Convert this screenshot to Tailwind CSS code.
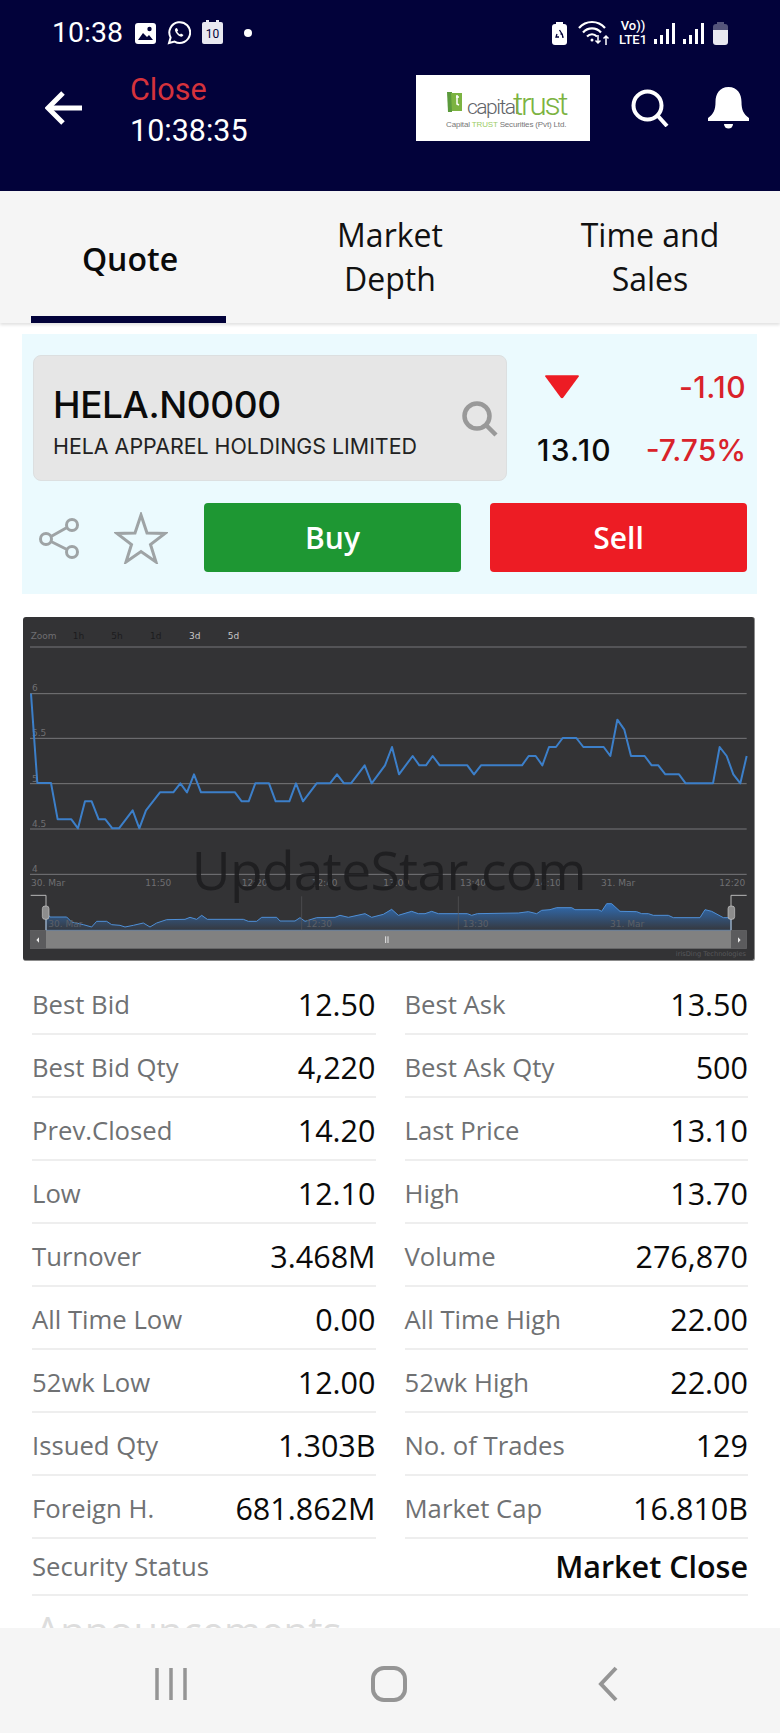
<!DOCTYPE html>
<html lang="en">
<head>
    <meta charset="UTF-8">
    <title>HELA.N0000 - Quote</title>
    <script src="https://cdn.jsdelivr.net/npm/@tailwindcss/browser@4"></script>
</head>
<body class="bg-white">
<div class="flex flex-col w-[780px] h-[1733px] overflow-hidden bg-white font-['Open_Sans',sans-serif]">

    <!-- status bar + app header -->
    <header class="h-[191px] shrink-0 bg-[#02023a] text-white font-['Roboto',sans-serif]">
        <div class="flex items-center h-[66px] pl-[52px] pr-[52px]">
            <span class="text-[28.500px] leading-none w-[83px]">10:38</span>
            <svg class="w-[21px] h-[21px]" viewBox="0 0 21 21"><rect width="21" height="21" rx="3" fill="#fff"/><circle cx="14.5" cy="6" r="2.2" fill="#02023a"/><path d="M3 17l5-7 4 4 2-2 4 5z" fill="#02023a"/></svg>
            <svg class="w-[24px] h-[24px] ml-[11px]" viewBox="0 0 24 24" fill="none" stroke="#fff" stroke-width="2"><path d="M2 22l1.6-5.5A10.4 10.4 0 1 1 7.6 20.6z"/><path d="M8.5 7.5c-1 1 -.6 3 1.5 5.400s4.300 3.300 5.500 2.400l1-1.400-2.500-1.500-1 1c-1-.4-2.300-1.700-2.800-2.900l1-1-1.300-2.600z" fill="#fff" stroke="none"/></svg>
            <div class="relative w-[21px] h-[22px] ml-[11px] rounded-[2px] bg-[#e8e8f0] text-[#02023a] text-[12px] leading-[25px] text-center">
                10
                <span class="absolute left-[4px] -top-[2px] w-[3px] h-[3px] bg-[#e8e8f0]"></span>
                <span class="absolute right-[4px] -top-[2px] w-[3px] h-[3px] bg-[#e8e8f0]"></span>
            </div>
            <span class="w-[8px] h-[8px] rounded-full bg-white ml-[21px]"></span>
            <div class="flex-1"></div>
            <svg class="w-[15px] h-[23px]" viewBox="0 0 15 23"><rect x="4" width="7" height="3" fill="#fff"/><rect y="2" width="15" height="21" rx="3" fill="#fff"/><path d="M7.500 8l2.500 4-1.500 0M5 12l-1 3h3M10 15h1l-1-3" stroke="#02023a" stroke-width="1.300" fill="none"/></svg>
            <svg class="w-[32px] h-[26px] ml-[11px]" viewBox="0 0 32 26" fill="none" stroke="#fff" stroke-width="2.200"><path d="M1 8c7-8 19-8 26 0"/><path d="M5 12.500c5-5.500 13-5.500 18 0"/><path d="M9 16.500c3-3 7-3 10 0"/><circle cx="14" cy="20" r="1.500" fill="#fff" stroke="none"/><path d="M20 15v8m-2.500-2.500L20 23l2.500-2.500M28 25v-9m-2.500 2.500L28 16l2.500 2.500" stroke-width="1.500"/></svg>
            <div class="w-[28px] ml-[9px] text-[13px] leading-[14px] font-medium text-center">Vo))<br>LTE1</div>
            <svg class="w-[21px] h-[21px] ml-[7px]" viewBox="0 0 21 21" fill="#fff"><rect x="0" y="16" width="3" height="5"/><rect x="6" y="12" width="3" height="9"/><rect x="12" y="6" width="3" height="15"/><rect x="18" y="0" width="3" height="21"/></svg>
            <svg class="w-[21px] h-[21px] ml-[8px]" viewBox="0 0 21 21" fill="#fff"><rect x="0" y="16" width="3" height="5"/><rect x="6" y="12" width="3" height="9"/><rect x="12" y="6" width="3" height="15"/><rect x="18" y="0" width="3" height="21"/></svg>
            <svg class="w-[15px] h-[23px] ml-[9px]" viewBox="0 0 15 23"><rect x="4" width="7" height="3" fill="#55557a"/><path d="M0 5a3 3 0 0 1 3-3h9a3 3 0 0 1 3 3v3H0z" fill="#55557a"/><path d="M0 8h15v12a3 3 0 0 1-3 3H3a3 3 0 0 1-3-3z" fill="#e8e8f0"/></svg>
        </div>
        <div class="flex items-start h-[80px] pt-[9px]">
            <svg class="w-[37px] h-[34px] ml-[45px] mt-[16px]" viewBox="0 0 37 34" fill="none" stroke="#fff" stroke-width="5"><path d="M37 17H4"/><path d="M18 2L3 17l15 15"/></svg>
            <div class="ml-[48px] w-[286px] -mt-[6px] text-[30.500px] leading-[41px]">
                <div class="text-[#d5323c]">Close</div>
                <div>10:38:35</div>
            </div>
            <!-- logo -->
            <div class="w-[174px] h-[66px] bg-white relative">
                <svg class="absolute left-[31px] top-[17px] w-[15px] h-[20px]" viewBox="0 0 15 20"><path d="M0 0h5v20H1z" fill="#5b9a3c"/><path d="M4 1h11v18H5z" fill="#7cb342"/><path d="M9 5h3M10 3v9l2 1" stroke="#fff" stroke-width="1.500" fill="none"/></svg>
                <span class="absolute left-[51px] top-[18px] text-[21px] leading-[28px] tracking-[-1.500px] text-[#5f6368] font-['Roboto',sans-serif] font-light">capital</span>
                <span class="absolute left-[97px] top-[10px] text-[32px] leading-[38px] tracking-[-2.400px] text-[#7cb342] font-['Roboto',sans-serif] font-light">trust</span>
                <span class="absolute left-[30px] top-[43px] text-[8px] leading-[13px] tracking-[-.15px] whitespace-nowrap text-[#777777] font-['Liberation_Sans',sans-serif]">Capital <span class="text-[#9ccc65]">TRUST</span> Securities (Pvt) Ltd.</span>
            </div>
            <svg class="w-[38px] h-[38px] ml-[41px] mt-[14px]" viewBox="0 0 38 38" fill="none" stroke="#fff" stroke-width="4"><circle cx="16.500" cy="16.500" r="14"/><path d="M26.500 26.500L36 37"/></svg>
            <svg class="w-[41px] h-[42px] ml-[39px] mt-[12px]" viewBox="0 0 41 42" fill="#fff"><path d="M20.500 0c9 0 13 7 13 15 0 8 2 12 7.500 16v3H0v-3c5.500-4 7.500-8 7.500-16 0-8 4-15 13-15z"/><path d="M16 37h9a4.500 4.500 0 0 1-9 0z"/></svg>
        </div>
    </header>

    <main class="flex-1 min-h-0 overflow-hidden">
        <!-- tabs -->
        <nav class="grid grid-cols-3 h-[132px] bg-[#f5f5f5] shadow-[0_2px_3px_rgba(0,0,0,0.12)] text-[#111111] text-[32px] leading-[44px] text-center">
            <div class="relative flex items-center justify-center font-semibold text-[#0a0a0a]">
                <span class="pt-[4px]">Quote</span>
                <div class="absolute left-[31px] bottom-0 w-[195px] h-[7px] bg-[#02023a]"></div>
            </div>
            <div class="flex items-center justify-center">Market<br>Depth</div>
            <div class="flex items-center justify-center">Time and<br>Sales</div>
        </nav>

        <!-- symbol card -->
        <section class="ml-[22px] mt-[11px] w-[735px] h-[260px] bg-[#ebfafe] pl-[11px] pt-[21px]">
            <div class="flex">
                <div class="relative w-[474px] h-[126px] rounded-[8px] bg-[#e6e6e6] border border-[#dcdfe0] pl-[19px] pt-[25px]">
                    <div class="text-[37px] leading-[48px] font-medium text-[#0b0b0b] font-['Inter',sans-serif] tracking-[-.4px]">HELA.N0000</div>
                    <div class="text-[21.400px] leading-[28px] mt-[3px] text-[#222222] font-['Inter',sans-serif]">HELA APPAREL HOLDINGS LIMITED</div>
                    <svg class="absolute left-[428px] top-[45px] w-[36px] h-[36px]" viewBox="0 0 36 36" fill="none" stroke="#999999" stroke-width="4.500"><circle cx="15" cy="15" r="12.500"/><path d="M24 24l10 10"/></svg>
                </div>
                <div class="ml-[30px] w-[209px] font-['Inter',sans-serif] font-medium">
                    <div class="flex items-center justify-between h-[42px] mt-[11px]">
                        <svg class="w-[36px] h-[24px] ml-[7px]" viewBox="0 0 35 23"><path d="M1 1a1 1 0 0 1 1-1h31a1 1 0 0 1 1 1L19 21.500a2 2 0 0 1-3 0z" fill="#ed1c24"/></svg>
                        <span class="text-[30px] leading-none text-[#d9222a] tracking-[.5px]">-1.10</span>
                    </div>
                    <div class="flex items-center justify-between h-[42px] mt-[21px]">
                        <span class="text-[30px] leading-none text-[#0b0b0b] tracking-[1.200px]">13.10</span>
                        <span class="text-[30px] leading-none text-[#d9222a]">-7.75%</span>
                    </div>
                </div>
            </div>
            <div class="flex items-center mt-[22px]">
                <svg class="w-[40px] h-[42px] ml-[6px]" viewBox="0 0 40 42" fill="none" stroke="#9ea3a5" stroke-width="3"><circle cx="33" cy="8" r="5.500"/><circle cx="7" cy="22" r="5.500"/><circle cx="33" cy="35" r="5.500"/><path d="M28 10.500L12 19.500M12 24.500l16 8"/></svg>
                <svg class="w-[54px] h-[52px] ml-[35px]" viewBox="0 0 54 52" fill="none" stroke="#9ea3a5" stroke-width="3"><path d="M27 3l6 18 18 .5-14.500 11 5.500 17.500-15-10.500-15 10.500 5.500-17.500L3 21.500l18-.5z"/></svg>
                <button class="w-[257px] h-[69px] ml-[36px] rounded-[4px] bg-[#1e9733] text-white text-[30px] font-semibold">Buy</button>
                <button class="w-[257px] h-[69px] ml-[29px] rounded-[4px] bg-[#ed1c24] text-white text-[30px] font-semibold">Sell</button>
            </div>
        </section>

        <!-- chart, coordinates are 3x screen pixels -->
        <section class="ml-[23px] mt-[23px] w-[732px] h-[344px] rounded-[3px] bg-[#333335] overflow-hidden border-r-1 border-b-1 border-[#8c8c8c]">
            <svg class="w-[731px] h-[343px]" viewBox="69 20 2193 1029" font-family="'DejaVu Sans',sans-serif">
                <defs>
                    <linearGradient id="navFill" x1="0" y1="0" x2="0" y2="1">
                        <stop offset="0" stop-color="#2f6db5"/>
                        <stop offset="1" stop-color="#36383d"/>
                    </linearGradient>
                </defs>
                <g stroke="#77777a" stroke-width="3">
                    <path d="M90 110H2240M90 250H2240M90 384H2240M90 520H2240M90 656H2240M90 792H2240"/>
                </g>
                <g font-size="27" fill="#6f6f72">
                    <text x="92" y="85">Zoom</text>
                    <text x="218" y="87" fill="#1c1c1e">1h</text>
                    <text x="334" y="87" fill="#1c1c1e">5h</text>
                    <text x="450" y="87" fill="#1c1c1e">1d</text>
                    <text x="567" y="87" fill="#c8c8c8">3d</text>
                    <text x="683" y="87" fill="#c8c8c8">5d</text>
                    <text x="96" y="243">6</text>
                    <text x="96" y="378">5.5</text>
                    <text x="96" y="515">5</text>
                    <text x="96" y="651">4.5</text>
                    <text x="96" y="786">4</text>
                    <text x="93" y="828">30. Mar</text>
                    <text x="436" y="828">11:50</text>
                    <text x="725" y="828">12:20</text>
                    <text x="935" y="828">12:40</text>
                    <text x="1150" y="828">13:00</text>
                    <text x="1380" y="828">13:40</text>
                    <text x="1605" y="828">14:10</text>
                    <text x="1803" y="828">31. Mar</text>
                    <text x="2158" y="828">12:20</text>
                </g>
                <polyline fill="none" stroke="#3c7fc9" stroke-width="6" stroke-linejoin="round" points="93,250 112,518 153,518 173,627 214,627 234,654 255,573 275,573 296,627 316,627 337,654 357,654 398,600 418,654 438,600 480,546 520,546 541,519 561,546 582,492 603,546 705,546 725,573 746,573 766,519 807,519 827,573 868,573 888,519 909,573 950,519 990,519 1011,492 1032,519 1053,519 1094,465 1115,519 1155,465 1176,410 1197,492 1238,437 1258,465 1278,465 1298,437 1319,465 1402,465 1422,492 1443,465 1566,465 1586,437 1607,437 1627,465 1647,410 1668,410 1688,383 1729,383 1750,410 1811,410 1831,437 1852,328 1873,358 1893,437 1934,437 1955,465 1975,465 1996,492 2037,492 2057,519 2139,519 2159,410 2180,437 2200,492 2221,519 2240,437"/>
                <!-- navigator -->
                <path fill="url(#navFill)" stroke="#4f8fd6" stroke-width="3" stroke-linejoin="round" d="M138 960V905L150 920 200 920 215 935 250 943 275 950 290 933 320 933 335 943 360 945 375 950 400 945 430 938 450 950 470 938 500 928 555 927 570 921 590 927 605 915 622 927 730 927 745 933 770 933 785 921 830 921 840 932 885 932 900 922 915 933 950 922 1005 921 1020 915 1045 921 1095 910 1115 921 1150 912 1175 897 1195 915 1235 903 1255 910 1275 910 1295 903 1315 910 1402 910 1415 915 1432 910 1555 908 1585 904 1610 910 1625 900 1650 898 1670 892 1715 892 1725 898 1795 898 1805 903 1820 880 1835 880 1860 903 1910 904 1925 910 1945 910 1960 915 2005 915 2020 922 2100 922 2115 898 2135 903 2170 922 2193 922V960Z"/>
                <path d="M905 858V960M1375 858V960" stroke="#57575a" stroke-width="2"/>
                <g font-size="27" fill="#5c6068">
                    <text x="145" y="950">30. Mar</text>
                    <text x="918" y="950">12:30</text>
                    <text x="1388" y="950">13:30</text>
                    <text x="1830" y="950">31. Mar</text>
                </g>
                <path d="M92 855H138V960M2193 960V855H2240" fill="none" stroke="#b9b9b9" stroke-width="3"/>
                <rect x="90" y="960" width="2150" height="55" fill="#818181"/>
                <rect x="90" y="960" width="48" height="55" fill="#5b5b5d"/>
                <rect x="2193" y="960" width="47" height="55" fill="#5b5b5d"/>
                <path d="M117 981l-8 8 8 8zM2214 981l8 8-8 8z" fill="#e6e6e6"/>
                <path d="M1157 978v20M1164 978v20" stroke="#e6e6e6" stroke-width="3"/>
                <rect x="127" y="887" width="20" height="40" rx="8" fill="#8d8d8d" stroke="#c8c8c8" stroke-width="2"/>
                <rect x="2184" y="887" width="20" height="40" rx="8" fill="#8d8d8d" stroke="#c8c8c8" stroke-width="2"/>
                <text x="2238" y="1038" font-size="20" fill="#58585b" text-anchor="end">irisDing Technologies</text>
                <text x="575" y="838" font-size="160" fill="#1d1d1f" fill-opacity=".9" font-family="'Open Sans',sans-serif" textLength="1185">UpdateStar.com</text>
            </svg>
        </section>

        <!-- quote table -->
        <section class="mt-[11px] mx-[32px] grid grid-cols-2 gap-x-[29px] text-[25.700px] text-[#6f7173]">
            <div class="flex items-center justify-between h-[63px] border-b-2 border-[#eeeeee] pt-[6px]"><span>Best Bid</span><span class="mb-[2px] text-[30.500px] font-medium text-[#0a0a0a]">12.50</span></div>
            <div class="flex items-center justify-between h-[63px] border-b-2 border-[#eeeeee] pt-[6px]"><span>Best Ask</span><span class="mb-[2px] text-[30.500px] font-medium text-[#0a0a0a]">13.50</span></div>
            <div class="flex items-center justify-between h-[63px] border-b-2 border-[#eeeeee] pt-[6px]"><span>Best Bid Qty</span><span class="mb-[2px] text-[30.500px] font-medium text-[#0a0a0a]">4,220</span></div>
            <div class="flex items-center justify-between h-[63px] border-b-2 border-[#eeeeee] pt-[6px]"><span>Best Ask Qty</span><span class="mb-[2px] text-[30.500px] font-medium text-[#0a0a0a]">500</span></div>
            <div class="flex items-center justify-between h-[63px] border-b-2 border-[#eeeeee] pt-[6px]"><span>Prev.Closed</span><span class="mb-[2px] text-[30.500px] font-medium text-[#0a0a0a]">14.20</span></div>
            <div class="flex items-center justify-between h-[63px] border-b-2 border-[#eeeeee] pt-[6px]"><span>Last Price</span><span class="mb-[2px] text-[30.500px] font-medium text-[#0a0a0a]">13.10</span></div>
            <div class="flex items-center justify-between h-[63px] border-b-2 border-[#eeeeee] pt-[6px]"><span>Low</span><span class="mb-[2px] text-[30.500px] font-medium text-[#0a0a0a]">12.10</span></div>
            <div class="flex items-center justify-between h-[63px] border-b-2 border-[#eeeeee] pt-[6px]"><span>High</span><span class="mb-[2px] text-[30.500px] font-medium text-[#0a0a0a]">13.70</span></div>
            <div class="flex items-center justify-between h-[63px] border-b-2 border-[#eeeeee] pt-[6px]"><span>Turnover</span><span class="mb-[2px] text-[30.500px] font-medium text-[#0a0a0a]">3.468M</span></div>
            <div class="flex items-center justify-between h-[63px] border-b-2 border-[#eeeeee] pt-[6px]"><span>Volume</span><span class="mb-[2px] text-[30.500px] font-medium text-[#0a0a0a]">276,870</span></div>
            <div class="flex items-center justify-between h-[63px] border-b-2 border-[#eeeeee] pt-[6px]"><span>All Time Low</span><span class="mb-[2px] text-[30.500px] font-medium text-[#0a0a0a]">0.00</span></div>
            <div class="flex items-center justify-between h-[63px] border-b-2 border-[#eeeeee] pt-[6px]"><span>All Time High</span><span class="mb-[2px] text-[30.500px] font-medium text-[#0a0a0a]">22.00</span></div>
            <div class="flex items-center justify-between h-[63px] border-b-2 border-[#eeeeee] pt-[6px]"><span>52wk Low</span><span class="mb-[2px] text-[30.500px] font-medium text-[#0a0a0a]">12.00</span></div>
            <div class="flex items-center justify-between h-[63px] border-b-2 border-[#eeeeee] pt-[6px]"><span>52wk High</span><span class="mb-[2px] text-[30.500px] font-medium text-[#0a0a0a]">22.00</span></div>
            <div class="flex items-center justify-between h-[63px] border-b-2 border-[#eeeeee] pt-[6px]"><span>Issued Qty</span><span class="mb-[2px] text-[30.500px] font-medium text-[#0a0a0a]">1.303B</span></div>
            <div class="flex items-center justify-between h-[63px] border-b-2 border-[#eeeeee] pt-[6px]"><span>No. of Trades</span><span class="mb-[2px] text-[30.500px] font-medium text-[#0a0a0a]">129</span></div>
            <div class="flex items-center justify-between h-[63px] border-b-2 border-[#eeeeee] pt-[6px]"><span>Foreign H.</span><span class="mb-[2px] text-[30.500px] font-medium text-[#0a0a0a]">681.862M</span></div>
            <div class="flex items-center justify-between h-[63px] border-b-2 border-[#eeeeee] pt-[6px]"><span>Market Cap</span><span class="mb-[2px] text-[30.500px] font-medium text-[#0a0a0a]">16.810B</span></div>
            <div class="col-span-2 flex items-center justify-between h-[57px] border-b-2 border-[#eeeeee] pt-[1px]"><span>Security Status</span><span class="text-[30.500px] font-semibold text-[#0a0a0a]">Market Close</span></div>
        </section>
        <div class="ml-[35px] mt-[11px] text-[40px] leading-[48px] font-medium text-[#dddddd]">Announcements</div>
    </main>

    <!-- android nav bar -->
    <footer class="flex h-[105px] shrink-0 bg-[#f5f5f5] items-start">
        <svg class="w-[36px] h-[36px] ml-[153px] mt-[38px]" viewBox="0 0 36 36" fill="none" stroke="#959595" stroke-width="3.500"><path d="M4 2v32M18 2v32M32 2v32"/></svg>
        <svg class="w-[38px] h-[38px] ml-[181px] mt-[37px]" viewBox="0 0 38 38" fill="none" stroke="#959595" stroke-width="4"><rect x="3" y="3" width="32" height="32" rx="11"/></svg>
        <svg class="w-[22px] h-[36px] ml-[189px] mt-[38px]" viewBox="0 0 22 36" fill="none" stroke="#959595" stroke-width="4"><path d="M19 2L4 18l15 16"/></svg>
    </footer>
</div>
</body>
</html>
